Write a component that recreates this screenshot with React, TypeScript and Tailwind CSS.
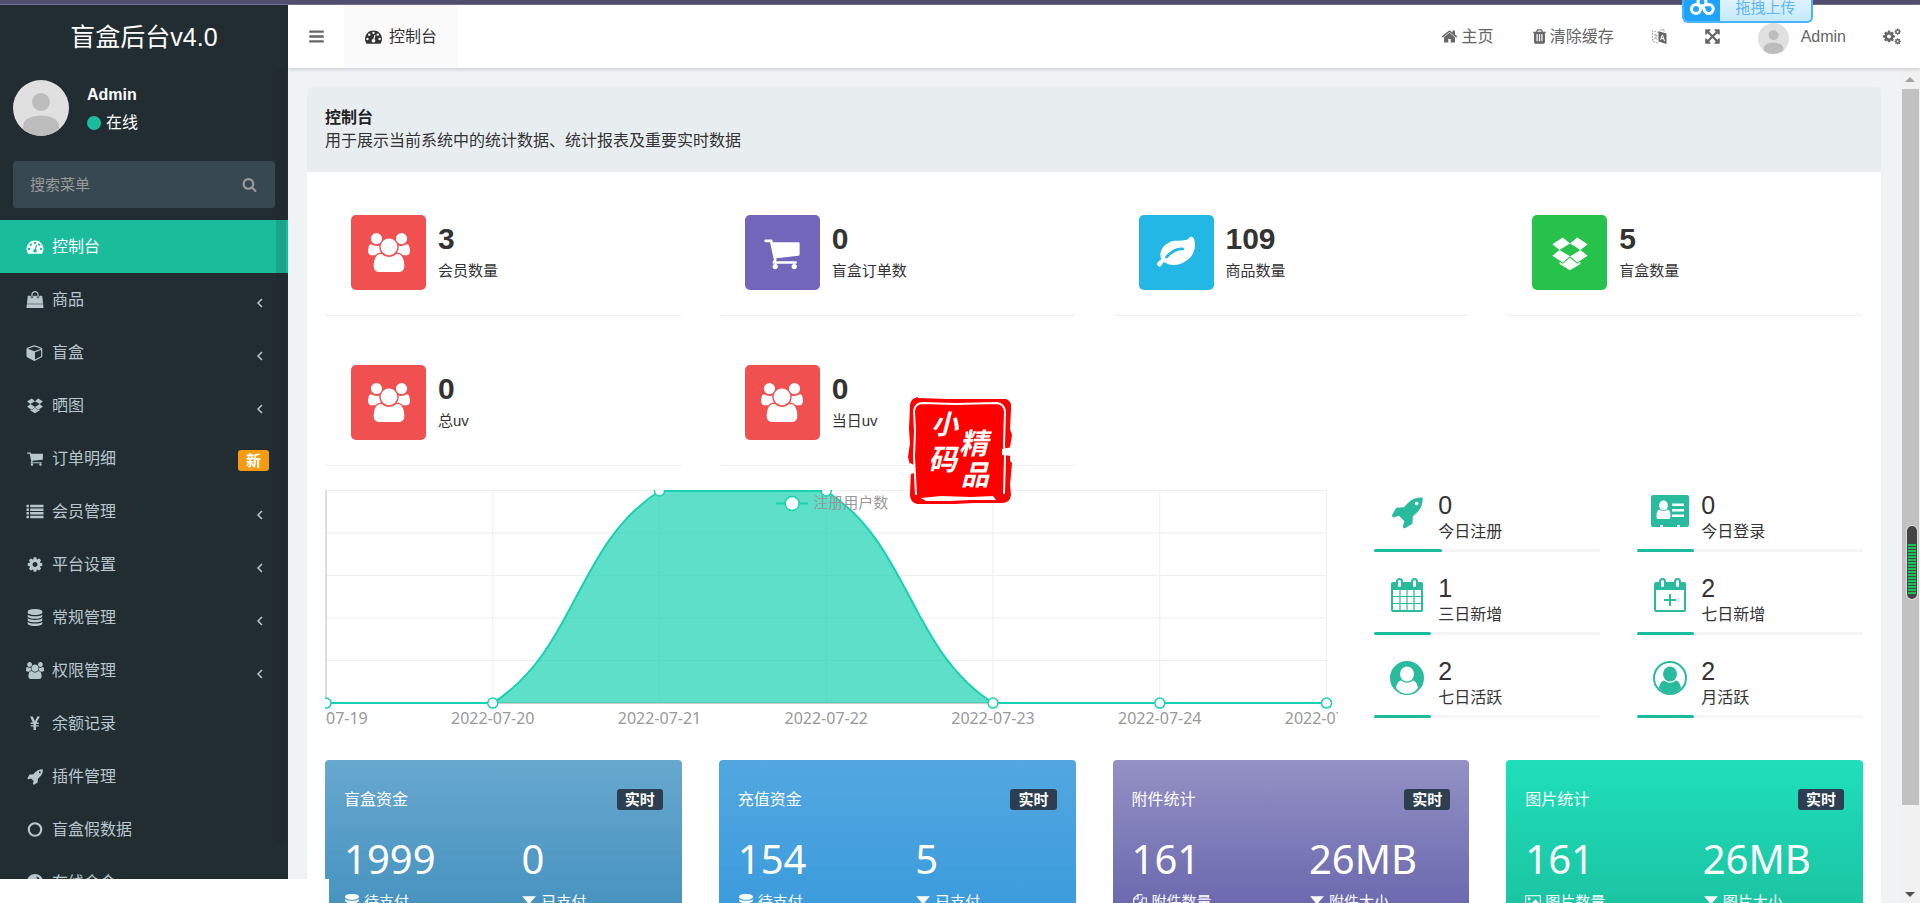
import React from 'react';

const GLYPHS = {
    dashboard: 'M384 1152q0-53-37.5-90.5t-90.5-37.5-90.5 37.5-37.5 90.5 37.5 90.5 90.5 37.5 90.5-37.5 37.5-90.5zm192-448q0-53-37.5-90.5t-90.5-37.5-90.5 37.5-37.5 90.5 37.5 90.5 90.5 37.5 90.5-37.5 37.5-90.5zm428 481l101-382q6-26-7.5-48.5t-38.5-29.5-48 6.5-30 39.5l-101 382q-60 5-107 43.5t-63 98.5q-20 77 20 146t117 89 146-20 89-117q16-60-6-117t-72-91zm660-33q0-53-37.5-90.5t-90.5-37.5-90.5 37.5-37.5 90.5 37.5 90.5 90.5 37.5 90.5-37.5 37.5-90.5zm-640-640q0-53-37.5-90.5t-90.5-37.5-90.5 37.5-37.5 90.5 37.5 90.5 90.5 37.5 90.5-37.5 37.5-90.5zm448 192q0-53-37.5-90.5t-90.5-37.5-90.5 37.5-37.5 90.5 37.5 90.5 90.5 37.5 90.5-37.5 37.5-90.5zm320 448q0 261-141 483-19 29-54 29h-1402q-35 0-54-29-141-221-141-483 0-182 71-348t191-286 286-191 348-71 348 71 286 191 191 286 71 348z',
    bag: 'M1757 1408l35 313q3 28-16 50-19 21-48 21h-1664q-29 0-48-21-19-22-16-50l35-313h1722zm-93-839l86 775h-1708l86-775q3-24 21-40.5t43-16.5h256v128q0 53 37.5 90.5t90.5 37.5 90.5-37.5 37.5-90.5v-128h384v128q0 53 37.5 90.5t90.5 37.5 90.5-37.5 37.5-90.5v-128h256q25 0 43 16.5t21 40.5zm-384-185v256q0 26-19 45t-45 19-45-19-19-45v-256q0-106-75-181t-181-75-181 75-75 181v256q0 26-19 45t-45 19-45-19-19-45v-256q0-159 112.5-271.5t271.5-112.5 271.5 112.5 112.5 271.5z',
    cube: 'M896 1629l640-349v-636l-640 233v752zm-64-865l698-254-698-254-698 254zm832-252v768q0 35-18 65t-49 47l-704 384q-28 16-61 16t-61-16l-704-384q-31-17-49-47t-18-65v-768q0-40 23-73t61-47l704-256q22-8 44-8t44 8l704 256q38 14 61 47t23 73z',
    dropbox: 'M554 160L896 445 402 749 64 479zM1238 160L1728 479 1390 749 896 445zM402 749L896 1054 554 1339 64 1020zM1390 749L1728 1020 1238 1339 896 1054zM896 1116L1239 1400 1386 1304V1412L896 1705 406 1412V1304L553 1400z',
    cart: 'M704 1536q0 52-38 90t-90 38-90-38-38-90 38-90 90-38 90 38 38 90zm896 0q0 52-38 90t-90 38-90-38-38-90 38-90 90-38 90 38 38 90zm128-1088v512q0 24-16.5 42.5t-40.5 21.5l-1044 122q13 60 13 70 0 16-24 64h920q26 0 45 19t19 45-19 45-45 19h-1024q-26 0-45-19t-19-45q0-11 8-31.5t16-36 21.5-40 15.5-29.5l-177-823h-204q-26 0-45-19t-19-45 19-45 45-19h256q16 0 28.5 6.5t19.5 15.5 13 24.5 8 26 5.5 29.5 4.5 26h1201q26 0 45 19t19 45z',
    list: 'M0 192h256v256H0zM384 192h1408v256H384zM0 576h256v256H0zM384 576h1408v256H384zM0 960h256v256H0zM384 960h1408v256H384zM0 1344h256v256H0zM384 1344h1408v256H384z',
    cog: 'M1152 896q0-106-75-181t-181-75-181 75-75 181 75 181 181 75 181-75 75-181zm512-109v222q0 12-8 23t-20 13l-185 28q-19 54-39 91 35 50 107 138 10 12 10 25t-9 23q-27 37-99 108t-94 71q-12 0-26-9l-138-108q-44 23-91 38-16 136-29 186-7 28-36 28h-222q-14 0-24.5-8.5t-11.5-21.5l-28-184q-49-16-90-37l-141 107q-10 9-25 9-14 0-25-11-126-114-165-168-7-10-7-23 0-12 8-23 15-21 51-66.5t54-70.5q-27-50-41-99l-183-27q-13-2-21-12.5t-8-23.5v-222q0-12 8-23t19-13l186-28q14-46 39-92-40-57-107-138-10-12-10-24 0-10 9-23 26-36 98.5-107.5t94.5-71.5q13 0 26 10l138 107q44-23 91-38 16-136 29-186 7-28 36-28h222q14 0 24.5 8.5t11.5 21.5l28 184q49 16 90 37l142-107q9-9 24-9 13 0 25 10 129 119 165 170 7 8 7 22 0 12-8 23-15 21-51 66.5t-54 70.5q26 50 41 98l183 28q13 2 21 12.5t8 23.5z',
    database: 'M896 768q237 0 443-43t325-127v170q0 69-103 128t-280 93.5-385 34.5-385-34.5-280-93.5-103-128v-170q119 84 325 127t443 43zm0 768q237 0 443-43t325-127v170q0 69-103 128t-280 93.5-385 34.5-385-34.5-280-93.5-103-128v-170q119 84 325 127t443 43zm0-384q237 0 443-43t325-127v170q0 69-103 128t-280 93.5-385 34.5-385-34.5-280-93.5-103-128v-170q119 84 325 127t443 43zm0-1152q208 0 385 34.5t280 93.5 103 128v128q0 69-103 128t-280 93.5-385 34.5-385-34.5-280-93.5-103-128v-128q0-69 103-128t280-93.5 385-34.5z',
    group: 'M593 896q-162 5-265 128h-134q-82 0-138-40.5t-56-118.5q0-353 124-353 6 0 43.5 21t97.5 42.5 119 21.5q67 0 133-23-5 37-5 66 0 139 81 256zm1071 637q0 120-73 189.5t-194 69.5h-874q-121 0-194-69.5t-73-189.5q0-53 3.5-103.5t14-109 26.5-108.5 43-97.5 62-81 85.5-53.5 111.5-20q10 0 43 21.5t73 48 107 48 135 21.5 135-21.5 107-48 73-48 43-21.5q61 0 111.5 20t85.5 53.5 62 81 43 97.5 26.5 108.5 14 109 3.5 103.5zm-1024-1277q0 106-75 181t-181 75-181-75-75-181 75-181 181-75 181 75 75 181zm704 384q0 159-112.5 271.5t-271.5 112.5-271.5-112.5-112.5-271.5 112.5-271.5 271.5-112.5 271.5 112.5 112.5 271.5zm576 225q0 78-56 118.5t-138 40.5h-134q-103-123-265-128 81-117 81-256 0-29-5-66 66 23 133 23 59 0 119-21.5t97.5-42.5 43.5-21q124 0 124 353zm-128-609q0 106-75 181t-181 75-181-75-75-181 75-181 181-75 181 75 75 181z',
    yen: 'M380 160h270l246 500 246-500h270l-350 640h230v150h-300v120h300v150h-300v370h-250v-370h-300v-150h300v-120h-300v-150h230z',
    rocket: 'M1504 448q0-40-28-68t-68-28-68 28-28 68 28 68 68 28 68-28 28-68zm224-288q0 249-75.5 430.5t-253.5 360.5q-81 80-195 176l-20 379q-2 16-16 26l-384 224q-7 4-16 4-12 0-23-9l-64-64q-13-14-8-32l85-276-281-281-276 85q-3 1-9 1-14 0-23-9l-64-64q-17-19-5-39l224-384q10-14 26-16l379-20q96-114 176-195 188-187 358-258t431-71q14 0 24 9.5t10 22.5z',
    ring: 'M896 128a768 768 0 1 0 0 1536a768 768 0 1 0 0-1536zM896 352a544 544 0 1 1 0 1088a544 544 0 1 1 0-1088z',
    disc: 'M896 0a850 850 0 1 0 0 1700a850 850 0 1 0 0-1700zM1000 260q420 40 420 500q-240-120-420-500z',
    search: 'M1216 832q0-185-131.5-316.5t-316.5-131.5-316.5 131.5-131.5 316.5 131.5 316.5 316.5 131.5 316.5-131.5 131.5-316.5zm512 832q0 52-38 90t-90 38q-54 0-90-38l-343-342q-179 124-399 124-143 0-273.5-55.5t-225-150-150-225-55.5-273.5 55.5-273.5 150-225 225-150 273.5-55.5 273.5 55.5 225 150 150 225 55.5 273.5q0 220-124 399l343 343q37 37 37 90z',
    bars: 'M192 256h1408q64 0 64 64v128q0 64-64 64H192q-64 0-64-64V320q0-64 64-64zM192 768h1408q64 0 64 64v128q0 64-64 64H192q-64 0-64-64V832q0-64 64-64zM192 1280h1408q64 0 64 64v128q0 64-64 64H192q-64 0-64-64v-128q0-64 64-64z',
    home: 'M1472 992v480q0 26-19 45t-45 19h-384v-384h-256v384h-384q-26 0-45-19t-19-45v-480q0-1 .5-3t.5-3l575-474 575 474q1 2 1 6zm223-69l-62 74q-8 9-21 11h-3q-13 0-21-7l-692-577-692 577q-12 8-24 7-13-2-21-11l-62-74q-8-10-7-23.5t11-21.5l719-599q32-26 76-26t76 26l244 204v-195q0-14 9-23t23-9h192q14 0 23 9t9 23v408l219 182q10 8 11 21.5t-7 23.5z',
    trash: 'M704 1376v-704q0-14-9-23t-23-9h-64q-14 0-23 9t-9 23v704q0 14 9 23t23 9h64q14 0 23-9t9-23zm256 0v-704q0-14-9-23t-23-9h-64q-14 0-23 9t-9 23v704q0 14 9 23t23 9h64q14 0 23-9t9-23zm256 0v-704q0-14-9-23t-23-9h-64q-14 0-23 9t-9 23v704q0 14 9 23t23 9h64q14 0 23-9t9-23zm-544-992h448l-48-117q-7-9-17-11h-317q-10 2-17 11zm928 32v64q0 14-9 23t-23 9h-96v948q0 83-47 143.5t-113 60.5h-832q-66 0-113-58.5t-47-141.5v-952h-96q-14 0-23-9t-9-23v-64q0-14 9-23t23-9h309l70-167q15-37 54-63t79-26h320q40 0 79 26t54 63l70 167h309q14 0 23 9t9 23z',
    arrows: 'M1411 541l-355 355 355 355 144-144q29-31 70-14 39 17 39 59v448q0 26-19 45t-45 19h-448q-42 0-59-40-17-39 14-69l144-144-355-355-355 355 144 144q31 30 14 69-17 40-59 40h-448q-26 0-45-19t-19-45v-448q0-42 40-59 39-17 69 14l144 144 355-355-355-355-144 144q-19 19-45 19-12 0-24-5-40-17-40-59v-448q0-26 19-45t45-19h448q42 0 59 40 17 39-14 69l-144 144 355 355 355-355-144-144q-31-30-14-69 17-40 59-40h448q26 0 45 19t19 45v448q0 42-39 59-13 5-25 5-26 0-45-19z',
    leaf: 'M1280 704q0-26-19-45t-45-19q-172 0-318 49.5t-259.5 134-235.5 219.5q-19 21-19 45 0 26 19 45t45 19q24 0 45-19 27-24 74-71t67-66q137-124 268.5-176t313.5-52q26 0 45-19t19-45zm512-198q0 95-20 193-46 224-184.5 383t-357.5 268q-214 108-438 108-148 0-286-47-15-5-88-42t-96-37q-16 0-39.5 32t-45 70-52.5 70-60 32q-43 0-63.5-17.5t-45.5-59.5q-2-4-6-11t-5.5-10-3-9.5-1.5-13.5q0-35 31-73.5t68-65.5 68-56 31-48q0-4-14-38t-16-44q-9-51-9-104 0-115 43.5-220t119-184.5 170.5-139 204-95.5q55-18 145-25.5t179.5-9 178.5-6 163.5-24 113.5-56.5l29.5-29.5 29.5-28 27-20 36.5-16 43.5-4.5q39 0 70.5 46t47.5 112 24 124 8 96z',
    filter: 'M128 256h1536l-576 680v700l-384-256V936z',
    files: 'M640 0h512v384h512v1408H768v-384H128V512zM600 200L300 500h300zM256 620v660h512V900l340-380V128H740v490zM1060 640L800 900h260zM900 1024v640h640V512h-350v512z',
    image: 'M64 128h1664q64 0 64 64v1408q0 64-64 64H64q-64 0-64-64V192q0-64 64-64zM128 256v1280h1536V256zM448 400a160 160 0 1 1 0 320a160 160 0 1 1 0-320zM256 1408v-200l320-320 160 160 450-450 350 400v410z',
};

type GlyphName = keyof typeof GLYPHS;

const HOLLOW: GlyphName[] = ['ring', 'disc', 'files', 'image'];

const Glyph: React.FC<{ name: GlyphName; className?: string }> = ({ name, className = 'size-4' }) => (
    <svg
        viewBox={name === 'group' ? '0 0 1920 1792' : '0 0 1792 1792'}
        fill="currentColor"
        fillRule={HOLLOW.includes(name) ? 'evenodd' : 'nonzero'}
        className={className}
        aria-hidden="true"
    >
        <path d={GLYPHS[name]} />
    </svg>
);

const CogsIcon = () => (
    <svg viewBox="0 0 1920 1792" fill="currentColor" className="h-[17px] w-[18px]" aria-hidden="true">
        <g transform="translate(-96 0) scale(.82) translate(0 190)"><path d={GLYPHS.cog} /></g>
        <g transform="translate(1180 0) scale(.43)"><path d={GLYPHS.cog} /></g>
        <g transform="translate(1180 1030) scale(.43)"><path d={GLYPHS.cog} /></g>
    </svg>
);

const LanguageIcon = () => (
    <svg viewBox="0 0 16 16" className="size-4" fill="none" aria-hidden="true">
        <path d="M8 3.5L1.5 1.6v10.8L8 14.4" stroke="#aaa" strokeDasharray="2 1" />
        <path d="M3 6l3.5 .8M4.8 5v1.5M6 7.2L3.2 10.6M3.8 8l2.4 2.8M9 1.2L13 .5v2" stroke="#999" strokeWidth=".8" />
        <path d="M7.5 2.2L15.5 4.6V15L7.5 12.6z" fill="#666" />
        <path d="M9.5 11l1.9-5.2 2.1 6.3M10.2 9.3l2.5.7" stroke="#fff" />
    </svg>
);

const Avatar: React.FC<{ className: string }> = ({ className }) => (
    <svg viewBox="0 0 56 56" className={`shrink-0 rounded-full ${className}`} aria-hidden="true">
        <rect width="56" height="56" fill="#e0e0e0" />
        <circle cx="28" cy="22" r="9" fill="#bdbdbd" />
        <path d="M10 46c0-14 36-14 36 0v10H10z" fill="#bdbdbd" />
    </svg>
);

const CardIcon = () => (
    <svg viewBox="0 0 38 34" className="h-[34px] w-[38px]" aria-hidden="true">
        <path fill="currentColor" d="M2 0h34q2 0 2 2v28q0 2-2 2h-7v-2h-3v2H12v-2H9v2H2q-2 0-2-2V2q0-2 2-2z" />
        <path fill="#fff" d="M12.500 5.500c5.800 0 5.800 10 0 10s-5.800-10 0-10zM8 14.500q4.500 3 9 0c2 1 2.500 4 2.500 7 0 2-1 2.500-2 2.500h-10c-1 0-2-.5-2-2.500 0-3 .5-6 2.500-7zM21 8.500h12v2.500H21zM21 14h12v2.500H21zM21 19.500h12v2.500H21z" />
    </svg>
);

const CalendarIcon: React.FC<{ plus?: boolean }> = ({ plus }) => (
    <svg viewBox="0 0 32 34" className="h-[34px] w-8" aria-hidden="true">
        <rect x="0" y="4" width="32" height="30" rx="2" fill="currentColor" />
        <path fill="#fff" d="M2 12h28v20H2z" />
        <rect x="6" y="1" width="5" height="9" rx="2.500" fill="#fff" stroke="currentColor" strokeWidth="2" />
        <rect x="21" y="1" width="5" height="9" rx="2.500" fill="#fff" stroke="currentColor" strokeWidth="2" />
        {plus
            ? <path d="M16 16v12M10 22h12" stroke="currentColor" strokeWidth="2" />
            : <path d="M2 18.500h28M2 25.500h28M9 12v20M16 12v20M23 12v20" stroke="currentColor" strokeWidth="1.200" />}
    </svg>
);

const UserCircleIcon: React.FC<{ outline?: boolean }> = ({ outline }) => (
    <svg viewBox="0 0 34 34" className="size-[34px]" aria-hidden="true">
        <circle cx="17" cy="17" r="16" fill={outline ? '#fff' : 'currentColor'} stroke="currentColor" strokeWidth="2" />
        <g fill={outline ? 'currentColor' : '#fff'}>
            <ellipse cx="17" cy="13" rx="7" ry="7.500" />
            <path d="M11 19.500q6 4.500 12 0c3 .5 4.500 4 5 7.500q-4.500 5.800-11 5.800T6 27c.5-3.500 2-7 5-7.500z" />
        </g>
    </svg>
);

interface MenuItem {
    label: string;
    icon: GlyphName;
    arrow?: boolean;
    badge?: string;
    active?: boolean;
}

const menu: MenuItem[] = [
    { label: '控制台', icon: 'dashboard', active: true },
    { label: '商品', icon: 'bag', arrow: true },
    { label: '盲盒', icon: 'cube', arrow: true },
    { label: '晒图', icon: 'dropbox', arrow: true },
    { label: '订单明细', icon: 'cart', badge: '新' },
    { label: '会员管理', icon: 'list', arrow: true },
    { label: '平台设置', icon: 'cog', arrow: true },
    { label: '常规管理', icon: 'database', arrow: true },
    { label: '权限管理', icon: 'group', arrow: true },
    { label: '余额记录', icon: 'yen' },
    { label: '插件管理', icon: 'rocket' },
    { label: '盲盒假数据', icon: 'ring' },
    { label: '在线命令', icon: 'disc' },
];

const Sidebar = () => (
    <aside className="relative w-72 shrink-0 overflow-hidden bg-[#222d32]">
        <a href="#" className="block h-[63px] text-center text-[25px] leading-[64px] text-white">盲盒后台v4.0</a>
        <div className="flex h-[93px] items-start gap-[18px] px-[13px] pt-3">
            <Avatar className="size-14" />
            <div className="text-base text-white">
                <p className="pt-[5px] font-bold leading-5">Admin</p>
                <p className="mt-2 flex items-center gap-[5px] leading-5">
                    <span className="size-3.5 rounded-full bg-[#1abc9c]" />
                    在线
                </p>
            </div>
        </div>
        <form className="mx-[13px] mb-3 flex h-[47px] items-center rounded bg-[#374850] pl-[17px] pr-[18px]">
            <input aria-label="搜索菜单" placeholder="搜索菜单" className="min-w-0 flex-1 bg-transparent text-[15px] leading-5 outline-none placeholder:text-[#999]" />
            <button type="button" aria-label="搜索" className="text-[#999]"><Glyph name="search" className="size-[15px]" /></button>
        </form>
        <nav>
            {menu.map((item) => (
                <a
                    key={item.label}
                    href="#"
                    className={`flex h-[53px] items-center pl-[26px] pr-[19px] text-base leading-5 ${item.active ? 'bg-[#1abc9c] text-white' : 'text-[#b8c7ce]'}`}
                >
                    <span className="mr-2 flex w-[18px] justify-center"><Glyph name={item.icon} className="h-[17px] w-[18px]" /></span>
                    <span className="flex-1">{item.label}</span>
                    {item.arrow && (
                        <svg viewBox="0 0 8 10" className="mr-[5px] mt-1.5 h-2.5 w-2" fill="none" stroke="currentColor" strokeWidth="1.500" aria-hidden="true">
                            <path d="M6 1L2 5l4 4" />
                        </svg>
                    )}
                    {item.badge && <span className="mt-1 rounded-[3px] bg-[#f39c12] px-2 text-[15px] font-bold leading-[21px] text-white">{item.badge}</span>}
                </a>
            ))}
        </nav>
        <div className="absolute bottom-[34px] right-0.5 top-[63px] w-2.5 rounded-b bg-[#1c1c2a]/15" />
    </aside>
);

const Topbar = () => (
    <header className="relative z-10 flex h-[63px] shrink-0 items-center bg-white text-base leading-5 text-[#666] shadow-[0_1px_4px_rgba(0,21,41,0.2)]">
        <button type="button" aria-label="菜单" className="flex h-full w-14 items-center justify-center"><Glyph name="bars" className="size-[17px]" /></button>
        <a href="#" className="flex h-full items-center gap-[7px] bg-[#fafafa] px-[21px] text-[#333]"><Glyph name="dashboard" className="size-[17px]" />控制台</a>
        <div className="ml-auto flex h-full items-center gap-[37px] pr-[19px]">
            <a href="#" className="flex items-center gap-1"><Glyph name="home" className="size-[17px]" />主页</a>
            <a href="#" className="flex items-center gap-0.5"><Glyph name="trash" className="size-[17px]" />清除缓存</a>
            <button type="button" aria-label="语言"><LanguageIcon /></button>
            <button type="button" aria-label="全屏"><Glyph name="arrows" className="size-[17px]" /></button>
            <a href="#" className="flex items-center gap-3"><Avatar className="mt-1 size-[31px]" />Admin</a>
            <button type="button" aria-label="设置"><CogsIcon /></button>
        </div>
    </header>
);

const totals: { value: number; label: string; icon: GlyphName; tile: string }[] = [
    { value: 3, label: '会员数量', icon: 'group', tile: 'bg-[#f05050]' },
    { value: 0, label: '盲盒订单数', icon: 'cart', tile: 'bg-[#7266ba]' },
    { value: 109, label: '商品数量', icon: 'leaf', tile: 'bg-[#23b7e5]' },
    { value: 5, label: '盲盒数量', icon: 'dropbox', tile: 'bg-[#27c24c]' },
    { value: 0, label: '总uv', icon: 'group', tile: 'bg-[#f05050]' },
    { value: 0, label: '当日uv', icon: 'group', tile: 'bg-[#f05050]' },
];

const TotalCards = () => (
    <div className="grid grid-cols-4 gap-x-[37px] gap-y-6">
        {totals.map((t) => (
            <div key={t.label} className="flex items-center gap-3 rounded border-b border-[#eee] px-[26px] py-[25px]">
                <div className={`flex size-[75px] items-center justify-center rounded-[5px] text-white ${t.tile}`}>
                    <Glyph name={t.icon} className={t.icon === 'group' ? 'h-[39px] w-[42px]' : 'size-[38px]'} />
                </div>
                <div className="pb-0.5 text-[#333]">
                    <p className="text-[30px] font-bold leading-[38px]">{t.value}</p>
                    <p className="text-[15px] leading-[26px]">{t.label}</p>
                </div>
            </div>
        ))}
    </div>
);

const X0 = 1;
const STEP = 166.7;
const BASE = 213;
const days = ['2022-07-19', '2022-07-20', '2022-07-21', '2022-07-22', '2022-07-23', '2022-07-24', '2022-07-25'];
const registered = [0, 0, 1, 1, 0, 0, 0];
const px = (i: number) => X0 + STEP * i;
const py = (i: number) => BASE - registered[i] * (BASE - 1);
const curve = days
    .map((_, i) => {
        if (i === 0) return `M${px(0)} ${py(0)}`;
        if (py(i) === py(i - 1)) return `L${px(i)} ${py(i)}`;
        const lift = (py(i) - py(i - 1)) / 4;
        return `C${px(i - 1) + STEP / 2} ${py(i - 1) + lift} ${px(i) - STEP / 2} ${py(i) - lift} ${px(i)} ${py(i)}`;
    })
    .join('');

const RegisterChart = () => (
    <svg viewBox="0 0 1013 245" className="h-auto w-full" role="img" aria-label="注册用户数">
        {[0, 1, 2, 3, 4].map((i) => <path key={i} d={`M1 ${i * 42.5 + 0.5}H1001`} stroke="#eee" />)}
        {days.map((d, i) => <path key={d} d={`M${px(i)} 0V${BASE}`} stroke={i === 0 ? '#bbb' : '#eee'} />)}
        <path d={`M1 ${BASE}H1001`} stroke="#ccc" strokeWidth="2" />
        <path d={`${curve}V${BASE}H1z`} fill="#18d1b1" fillOpacity="0.7" />
        <path d={curve} fill="none" stroke="#18d1b1" strokeWidth="2" />
        {days.map((d, i) => <circle key={d} cx={px(i)} cy={py(i)} r="5" fill="#fff" stroke="#18d1b1" strokeWidth="1.500" />)}
        <path d="M451 13.500H483" stroke="#18d1b1" strokeWidth="2" />
        <circle cx="467" cy="13.500" r="7" fill="#fff" stroke="#18d1b1" strokeWidth="1.500" />
        <text x="488" y="18" fontSize="15" fill="#999">注册用户数</text>
        {days.map((d, i) => (
            <text key={d} x={px(i)} y="234" fontSize="16" fill="#999" textAnchor="middle" className="font-['Noto_Sans',sans-serif]">{d}</text>
        ))}
    </svg>
);

const actives: { value: number; label: string; icon: React.ReactNode; percent: number }[] = [
    { value: 0, label: '今日注册', icon: <Glyph name="rocket" className="size-[34px]" />, percent: 30 },
    { value: 0, label: '今日登录', icon: <CardIcon />, percent: 25 },
    { value: 1, label: '三日新增', icon: <CalendarIcon />, percent: 25 },
    { value: 2, label: '七日新增', icon: <CalendarIcon plus />, percent: 25 },
    { value: 2, label: '七日活跃', icon: <UserCircleIcon />, percent: 25 },
    { value: 2, label: '月活跃', icon: <UserCircleIcon outline />, percent: 25 },
];

const ActiveStats = () => (
    <div className="grid grid-cols-2 gap-x-[37px] gap-y-[21px] self-start">
        {actives.map((a) => (
            <div key={a.label}>
                <div className="flex h-[50px] items-start gap-3 pl-3.5 text-[#333]">
                    <span className="flex w-[38px] justify-center pt-[5px] text-[#2abb9e]">{a.icon}</span>
                    <div>
                        <p className="text-[25px] leading-[30px]">{a.value}</p>
                        <p className="text-base leading-6">{a.label}</p>
                    </div>
                </div>
                <div className="mt-[9px] h-[3px] rounded-full bg-[#f5f5f5]">
                    <div className="h-full rounded-full bg-[#1abc9c]" style={{ width: `${a.percent}%` }} />
                </div>
            </div>
        ))}
    </div>
);

interface Fund {
    title: string;
    tone: string;
    cells: { value: string; label: string; icon: GlyphName }[];
}

const funds: Fund[] = [
    { title: '盲盒资金', tone: 'from-[#67a8ce] to-[#3c8dbc]', cells: [{ value: '1999', label: '待支付', icon: 'database' }, { value: '0', label: '已支付', icon: 'filter' }] },
    { title: '充值资金', tone: 'from-[#52a7e0] to-[#3498db]', cells: [{ value: '154', label: '待支付', icon: 'database' }, { value: '5', label: '已支付', icon: 'filter' }] },
    { title: '附件统计', tone: 'from-[#9491c4] to-[#605ca8]', cells: [{ value: '161', label: '附件数量', icon: 'files' }, { value: '26MB', label: '附件大小', icon: 'filter' }] },
    { title: '图片统计', tone: 'from-[#1fdfba] to-[#1abc9c]', cells: [{ value: '161', label: '图片数量', icon: 'image' }, { value: '26MB', label: '图片大小', icon: 'filter' }] },
];

const FundCards = () => (
    <div className="mt-[25px] grid grid-cols-4 gap-x-[37px]">
        {funds.map((f) => (
            <div key={f.title} className={`h-[190px] rounded bg-linear-to-b px-[19px] pt-[29px] text-white ${f.tone}`}>
                <div className="flex items-center justify-between">
                    <h5 className="text-base leading-[21px]">{f.title}</h5>
                    <span className="rounded-[3px] bg-[#2c3e50] px-2 text-[15px] font-bold leading-[21px]">实时</span>
                </div>
                <div className="-mr-[18px] mt-[19px] grid grid-cols-2 gap-x-[18px]">
                    {f.cells.map((c) => (
                        <div key={c.label}>
                            <p className="font-['Noto_Sans',sans-serif] text-[40px] leading-[60px]">{c.value}</p>
                            <p className="mt-0.5 flex items-center gap-1 text-[15px] leading-[22px]"><Glyph name={c.icon} className="size-4" />{c.label}</p>
                        </div>
                    ))}
                </div>
            </div>
        ))}
    </div>
);

const Scrollbar = () => (
    <div className="flex w-5 shrink-0 flex-col items-center justify-between bg-[#f1f1f1]" aria-hidden="true">
        <svg viewBox="0 0 20 21" className="h-[21px] w-5"><path d="M5 14h10l-5-5z" fill="#a3a3a3" /></svg>
        <div className="mb-[77px] w-[17px] flex-1 bg-[#c1c1c1]" />
        <svg viewBox="0 0 20 21" className="h-[21px] w-5"><path d="M5 10h10l-5 5z" fill="#505050" /></svg>
    </div>
);

const UploadDrop = () => (
    <button type="button" className="absolute right-[107px] top-0 z-20 flex h-[23px] w-[131px] overflow-hidden rounded-b-md border-2 border-t-0 border-[#4db2ff] bg-linear-to-b from-[#dff1fd] to-[#c3ebff] text-[15px] leading-4 text-[#5fb6f7]">
        <svg viewBox="0 0 36 21" className="h-[21px] w-9 bg-[#1fa3ff]" fill="none" stroke="#fff" strokeWidth="3" aria-hidden="true">
            <circle cx="18" cy="2" r="4" />
            <circle cx="12" cy="9" r="4.500" />
            <path d="M18 5l3 6.500a4.500 4.500 0 1 0 1-6" />
        </svg>
        <span className="flex-1">拖拽上传</span>
    </button>
);

const Seal = () => (
    <svg viewBox="0 0 104 107" className="absolute left-[47.3%] top-[397px] z-10 h-[107px] w-[104px]" aria-hidden="true">
        <path fill="#fe0000" d="M10 1L40 2 98 2q6 2 5 10l-1 20 2 6-2 12v14l2 2-2 22 1 10q-1 8-9 8H66l-20 1H9q-7-2-7-9l1-26-3-12 2-14-1-14 1-24q1-7 8-8z" />
        <path fill="none" stroke="#fff" strokeWidth="2" d="M8 98L6 60 7 34 6 14q1-8 9-8l32 1 42-1q7 1 8 8l-1 34 1 12-1 37" />
        <path fill="#fff" d="M13 101l20-2 30 1 22-1 3 4H62l-20 1H18zM94 52l10-2v9l-10-1zM2 66l4 2v8l-6 2z" />
        <g fill="#fff" fontWeight="700" fontStyle="italic">
            <text x="23" y="37" fontSize="27">小</text>
            <text x="20" y="73" fontSize="29">码</text>
            <text x="51" y="57" fontSize="29">精</text>
            <text x="53" y="88" fontSize="28">品</text>
        </g>
    </svg>
);

const Meter = () => (
    <div className="absolute right-[3px] top-[526px] z-20 h-[73px] w-2.5 rounded-full bg-[#444] px-px pb-1 pt-[18px] ring-1 ring-[#ddd]" aria-hidden="true">
        <div className="h-full bg-[repeating-linear-gradient(to_bottom,#16c45c_0px,#16c45c_2px,#3c4a40_2px,#3c4a40_3px)]" />
    </div>
);

const App: React.FC = () => (
    <div className="relative flex h-screen flex-col overflow-hidden bg-white font-['Liberation_Sans','Noto_Sans_CJK_SC',sans-serif]">
        <div className="h-[5px] shrink-0 border-b border-[#77749a] bg-[#50506e]" />
        <div className="flex min-h-0 flex-1">
            <div className="flex pb-6"><Sidebar /></div>
            <div className="flex min-w-0 flex-1 flex-col">
                <Topbar />
                <div className="flex min-h-0 flex-1">
                    <main className="min-w-0 flex-1 overflow-hidden bg-[#eff3f6] px-[19px] pt-[19px]">
                        <section className="overflow-hidden rounded bg-white">
                            <div className="h-[85px] bg-[#e8edf0] px-[18px] pt-[19px] text-base leading-[23px] text-[#333]">
                                <h1 className="font-bold text-[#222]">控制台</h1>
                                <p>用于展示当前系统中的统计数据、统计报表及重要实时数据</p>
                            </div>
                            <div className="p-[18px]">
                                <TotalCards />
                                <div className="mt-6 grid grid-cols-12 gap-x-9">
                                    <div className="col-span-8"><RegisterChart /></div>
                                    <div className="col-span-4"><ActiveStats /></div>
                                </div>
                                <FundCards />
                            </div>
                        </section>
                    </main>
                    <Scrollbar />
                </div>
            </div>
        </div>
        <div className="absolute bottom-0 left-0 z-10 h-6 w-[329px] bg-white" />
        <UploadDrop />
        <Seal />
        <Meter />
    </div>
);

export default App;
